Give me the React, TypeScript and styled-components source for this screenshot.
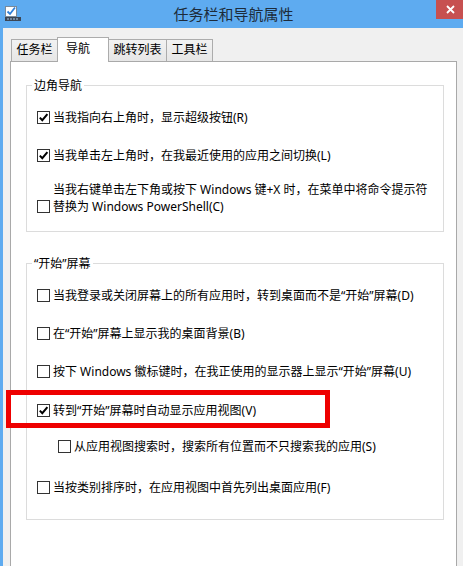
import React from "react";
import styled, { createGlobalStyle, css } from "styled-components";

const GlobalStyle = createGlobalStyle`
  html, body { margin: 0; padding: 0; background: #f0f0f0; }
  body { font-family: "Noto Sans", "Noto Sans CJK SC", sans-serif; }
  * { box-sizing: border-box; }
`;

const Window = styled.div`
  position: relative;
  width: 463px;
  height: 566px;
  overflow: hidden;
  background: #5eabf0;
  display: flex;
  flex-direction: column;
`;

const TitleBar = styled.div`
  height: 28px;
  flex-shrink: 0;
  display: grid;
  grid-template-columns: 1fr auto 1fr;
  align-items: center;
`;

const AppIcon = styled.svg`
  justify-self: start;
  margin-left: 5px;
  width: 16px;
  height: 16px;
`;

const Title = styled.div`
  font-family: "Noto Sans CJK SC", sans-serif;
  font-size: 15px;
  color: #1d2b3a;
  line-height: 20px;
  padding-left: 4px;
`;

const CloseButton = styled.div`
  justify-self: end;
  align-self: start;
  width: 27px;
  height: 19px;
  background: #c75050;
  color: #fff;
  display: flex;
  align-items: center;
  justify-content: center;
  padding-left: 2px;
`;

const Client = styled.div`
  margin-left: 3px;
  flex: 1;
  background: #f0f0f0;
  padding: 9px 0 0 7px;
  display: flex;
  flex-direction: column;
`;

const Tabs = styled.div`
  display: flex;
  align-items: flex-end;
  margin-left: 2px;
`;

const Tab = styled.div<{ $active?: boolean; $width: number }>`
  position: relative;
  width: ${(p) => p.$width}px;
  height: 22px;
  margin-left: -1px;
  border: 1px solid #acacac;
  border-bottom: none;
  background: linear-gradient(#f2f2f2, #e6e6e6);
  font-size: 12px;
  line-height: 20px;
  color: #000;
  text-align: center;
  ${(p) =>
    p.$active &&
    css`
      height: 25px;
      margin-bottom: -1px;
      z-index: 1;
      background: #fff;
      padding-right: 10px;
      line-height: 21px;
    `}
`;

const Panel = styled.div`
  width: 447px;
  height: 530px;
  flex-shrink: 0;
  background: #fff;
  border: 1px solid #a9a9a9;
  padding: 0 0 0 15px;
`;

const Group = styled.fieldset<{ $top: number; $bottom: number }>`
  width: 418px;
  margin: ${(p) => p.$top}px 0 0 0;
  padding: 15px 0 ${(p) => p.$bottom}px 0;
  border: 1px solid #dcdcdc;
  min-inline-size: 0;
`;

const Legend = styled.legend`
  margin-left: 5px;
  padding: 0 2px;
  font-size: 12px;
  line-height: 17px;
  color: #000;
`;

const Rows = styled.div`
  display: flex;
  flex-direction: column;
  padding-left: 10px;
`;

const Row = styled.label<{ $mt: number; $indent?: number; $multi?: boolean }>`
  display: flex;
  align-items: ${(p) => (p.$multi ? "flex-end" : "center")};
  gap: 3px;
  margin-top: ${(p) => p.$mt}px;
  margin-left: ${(p) => p.$indent || 0}px;
  font-size: 12px;
  line-height: 17px;
  color: #000;
  white-space: pre-line;
`;

const Box = styled.span<{ $multi?: boolean }>`
  flex-shrink: 0;
  width: 13px;
  height: 13px;
  border: 1px solid #333;
  background: #fff;
  display: flex;
  align-items: center;
  justify-content: center;
  margin-bottom: ${(p) => (p.$multi ? "2px" : "0")};
`;

const Text = styled.span``;

const RedMark = styled.div`
  position: absolute;
  left: 6px;
  top: 390px;
  width: 324px;
  height: 38px;
  border: 5px solid #ee0000;
  pointer-events: none;
`;

type Item = { text: string; checked?: boolean; mt: number; indent?: number; multi?: boolean };

const group1: Item[] = [
  { text: "当我指向右上角时，显示超级按钮(R)", checked: true, mt: 0 },
  { text: "当我单击左上角时，在我最近使用的应用之间切换(L)", checked: true, mt: 21 },
  {
    text: "当我右键单击左下角或按下 Windows 键+X 时，在菜单中将命令提示符\n替换为 Windows PowerShell(C)",
    mt: 17,
    multi: true,
  },
];

const group2: Item[] = [
  { text: "当我登录或关闭屏幕上的所有应用时，转到桌面而不是“开始”屏幕(D)", mt: 0 },
  { text: "在“开始”屏幕上显示我的桌面背景(B)", mt: 21 },
  { text: "按下 Windows 徽标键时，在我正使用的显示器上显示“开始”屏幕(U)", mt: 21 },
  { text: "转到“开始”屏幕时自动显示应用视图(V)", checked: true, mt: 22 },
  { text: "从应用视图搜索时，搜索所有位置而不只搜索我的应用(S)", mt: 19, indent: 21 },
  { text: "当按类别排序时，在应用视图中首先列出桌面应用(F)", mt: 24 },
];

const Check = () => (
  <svg width="11" height="11" viewBox="0 0 11 11">
    <polyline points="1.8,5.6 4.3,8.2 9.4,2.2" fill="none" stroke="#000" strokeWidth="2" />
  </svg>
);

const CheckRow = ({ item }: { item: Item }) => (
  <Row $mt={item.mt} $indent={item.indent} $multi={item.multi}>
    <Box $multi={item.multi}>{item.checked && <Check />}</Box>
    <Text>{item.text}</Text>
  </Row>
);

export default function App() {
  return (
    <>
      <GlobalStyle />
      <Window>
        <TitleBar>
          <AppIcon viewBox="0 0 16 16">
            <rect x="0.5" y="0.5" width="11" height="10" fill="#fff" stroke="#7a8a9a" />
            <polyline points="2.5,5.5 5,8 10,1.5" fill="none" stroke="#2f7fd8" strokeWidth="1.8" />
            <rect x="0" y="11" width="16" height="4" fill="#3c4654" />
            <rect x="2" y="12.5" width="2" height="1" fill="#a8c8e8" />
            <rect x="5" y="12.5" width="2" height="1" fill="#a8c8e8" />
            <rect x="8" y="12.5" width="2" height="1" fill="#a8c8e8" />
            <rect x="11" y="12.5" width="2" height="1" fill="#a8c8e8" />
          </AppIcon>
          <Title>任务栏和导航属性</Title>
          <CloseButton>
            <svg width="9" height="9" viewBox="0 0 9 9">
              <path d="M1 1 L8 8 M8 1 L1 8" stroke="#fff" strokeWidth="1.8" />
            </svg>
          </CloseButton>
        </TitleBar>
        <Client>
          <Tabs>
            <Tab $width={47}>任务栏</Tab>
            <Tab $width={52} $active>导航</Tab>
            <Tab $width={59}>跳转列表</Tab>
            <Tab $width={47}>工具栏</Tab>
          </Tabs>
          <Panel>
            <Group $top={15} $bottom={16}>
              <Legend>边角导航</Legend>
              <Rows>
                {group1.map((it, i) => (
                  <CheckRow key={i} item={it} />
                ))}
              </Rows>
            </Group>
            <Group $top={23} $bottom={23}>
              <Legend>“开始”屏幕</Legend>
              <Rows>
                {group2.map((it, i) => (
                  <CheckRow key={i} item={it} />
                ))}
              </Rows>
            </Group>
          </Panel>
        </Client>
        <RedMark />
      </Window>
    </>
  );
}
